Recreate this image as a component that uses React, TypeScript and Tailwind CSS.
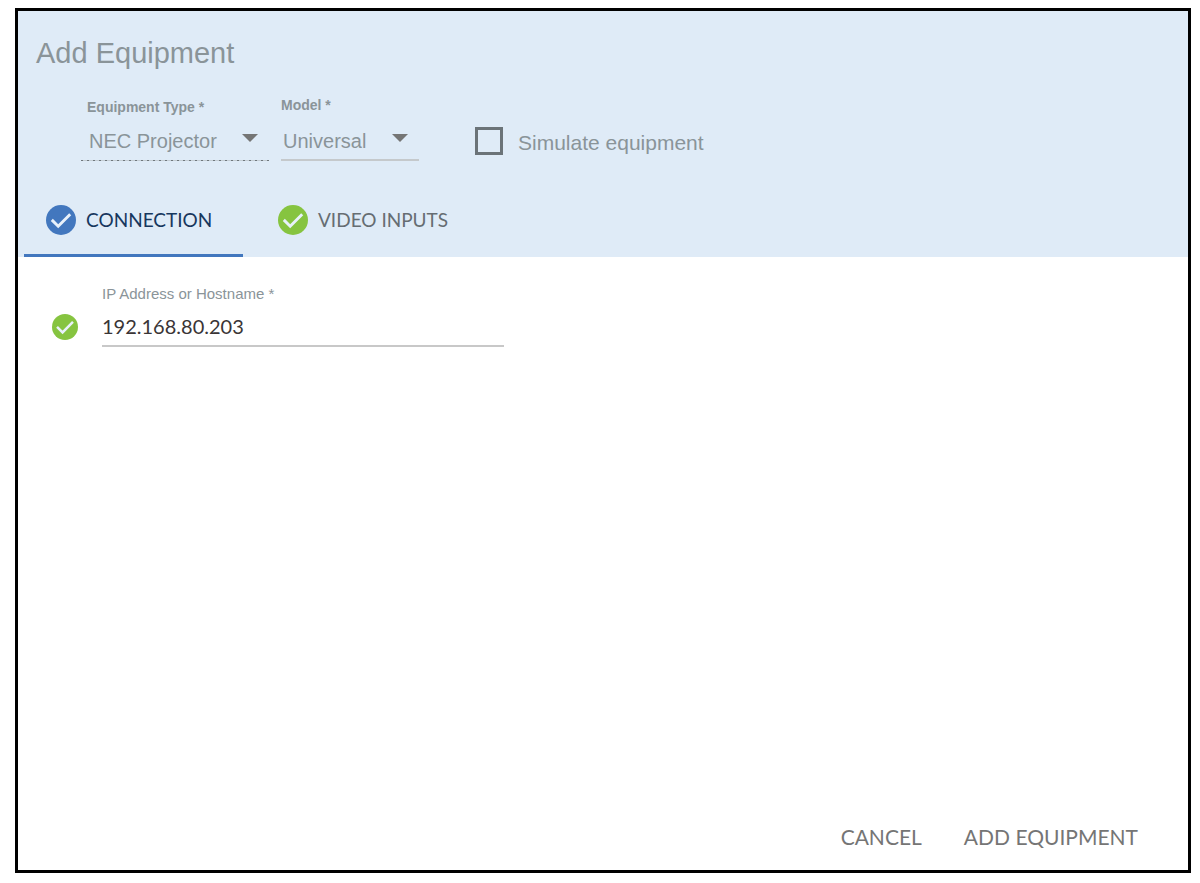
import { useState } from "react"

const CheckBadge = ({ className }: { className: string }) => (
    <svg viewBox="0 0 30 30" className={className} aria-hidden="true">
        <circle cx="15" cy="15" r="15" fill="currentColor" />
        <path d="M5.8 14.9 L12.2 21.2 L24.2 9.2" fill="none" stroke="#e8f1fa" strokeWidth="2.9" />
    </svg>
)

const Arrow = () => (
    <svg viewBox="0 0 16 8" className="pointer-events-none absolute right-[11px] top-[5px] h-2 w-4 text-[#757575]" aria-hidden="true">
        <path d="M0 0H16L8 8Z" fill="currentColor" />
    </svg>
)

export default function AddEquipmentPage() {
    const [model, setModel] = useState('Universal')
    const [simulate, setSimulate] = useState(false)
    const [tab, setTab] = useState('connection')
    const [host, setHost] = useState('192.168.80.203')

    return (
        <main className="flex min-h-screen bg-white pt-2 pr-[9px] pb-[10px] pl-[15px] font-['Liberation_Sans',Arial,sans-serif] text-[#8a9499]">
            <form className="flex flex-1 flex-col border-3 border-black" onSubmit={e => e.preventDefault()}>
                <header className="bg-[#dfebf7]">
                    <h1 className="px-[18px] pt-6 text-[29px] leading-9">Add Equipment</h1>

                    <div className="flex items-start px-[63px] pt-6">
                        <div className="w-[188px]">
                            <label htmlFor="type" className="block pt-[2px] pl-[6px] text-sm font-bold">Equipment Type *</label>
                            <div className="relative mt-3">
                                <select id="type" disabled className="block h-[31px] w-full appearance-none pb-[7px] pl-2 text-xl leading-6 disabled:opacity-100">
                                    <option>NEC Projector</option>
                                </select>
                                <Arrow />
                                {/* dotted rule marks the field as locked */}
                                <div className="h-px bg-[repeating-linear-gradient(to_right,#6f777c_0_2px,#c3ccd3_2px_6px)]" />
                            </div>
                        </div>
                        <div className="ml-3 w-[138px]">
                            <label htmlFor="model" className="block text-sm font-bold">Model *</label>
                            <div className="relative mt-[14px] border-b-2 border-[#c5c9cc]">
                                <select id="model" value={model} onChange={e => setModel(e.target.value)} className="block h-[30px] w-full appearance-none pb-[6px] pl-[2px] text-xl leading-6">
                                    <option>Universal</option>
                                </select>
                                <Arrow />
                            </div>
                        </div>
                        <label className="mt-[30px] ml-14 flex items-center gap-[15px] text-[21px] leading-7">
                            <input
                                type="checkbox" checked={simulate} onChange={e => setSimulate(e.target.checked)}
                                className="size-7 appearance-none border-3 border-[#6b7378] checked:bg-[#4277be]"
                            />
                            <span className="pt-1">Simulate equipment</span>
                        </label>
                    </div>

                    <nav className="mt-[25px] flex gap-[13px] px-[6px] font-[Lato,sans-serif] text-[19px]">
                        <button
                            type="button" onClick={() => setTab('connection')}
                            className={`flex h-[71px] w-[219px] items-center gap-[10px] border-b-3 pl-[22px] ${tab === 'connection' ? 'border-[#4277be] text-[#17375e]' : 'border-transparent text-[#666d72]'}`}
                        >
                            <CheckBadge className="size-[30px] text-[#4277be]" />
                            CONNECTION
                        </button>
                        <button
                            type="button" onClick={() => setTab('inputs')}
                            className={`flex h-[71px] w-[219px] items-center gap-[10px] border-b-3 pl-[22px] ${tab === 'inputs' ? 'border-[#4277be] text-[#17375e]' : 'border-transparent text-[#666d72]'}`}
                        >
                            <CheckBadge className="size-[30px] text-[#86c440]" />
                            VIDEO INPUTS
                        </button>
                    </nav>
                </header>

                <section className="flex flex-1 items-start gap-6 px-[34px] pt-[27px]">
                    <CheckBadge className="mt-[30px] size-[26px] text-[#86c440]" />
                    <div className="w-[402px]">
                        <label htmlFor="host" className="block text-[15px] leading-5">IP Address or Hostname *</label>
                        <input
                            id="host" value={host} onChange={e => setHost(e.target.value)}
                            className="block h-[43px] w-full border-b-2 border-[#c8c8c8] pt-[2px] font-[Lato,sans-serif] text-xl text-[#3a3536] outline-none"
                        />
                    </div>
                </section>

                <footer className="flex justify-end gap-[42px] pr-[50px] pb-[17px] font-[Lato,sans-serif] text-[21px] leading-8 text-[#757575]">
                    <button type="button">CANCEL</button>
                    <button type="submit">ADD EQUIPMENT</button>
                </footer>
            </form>
        </main>
    )
}
